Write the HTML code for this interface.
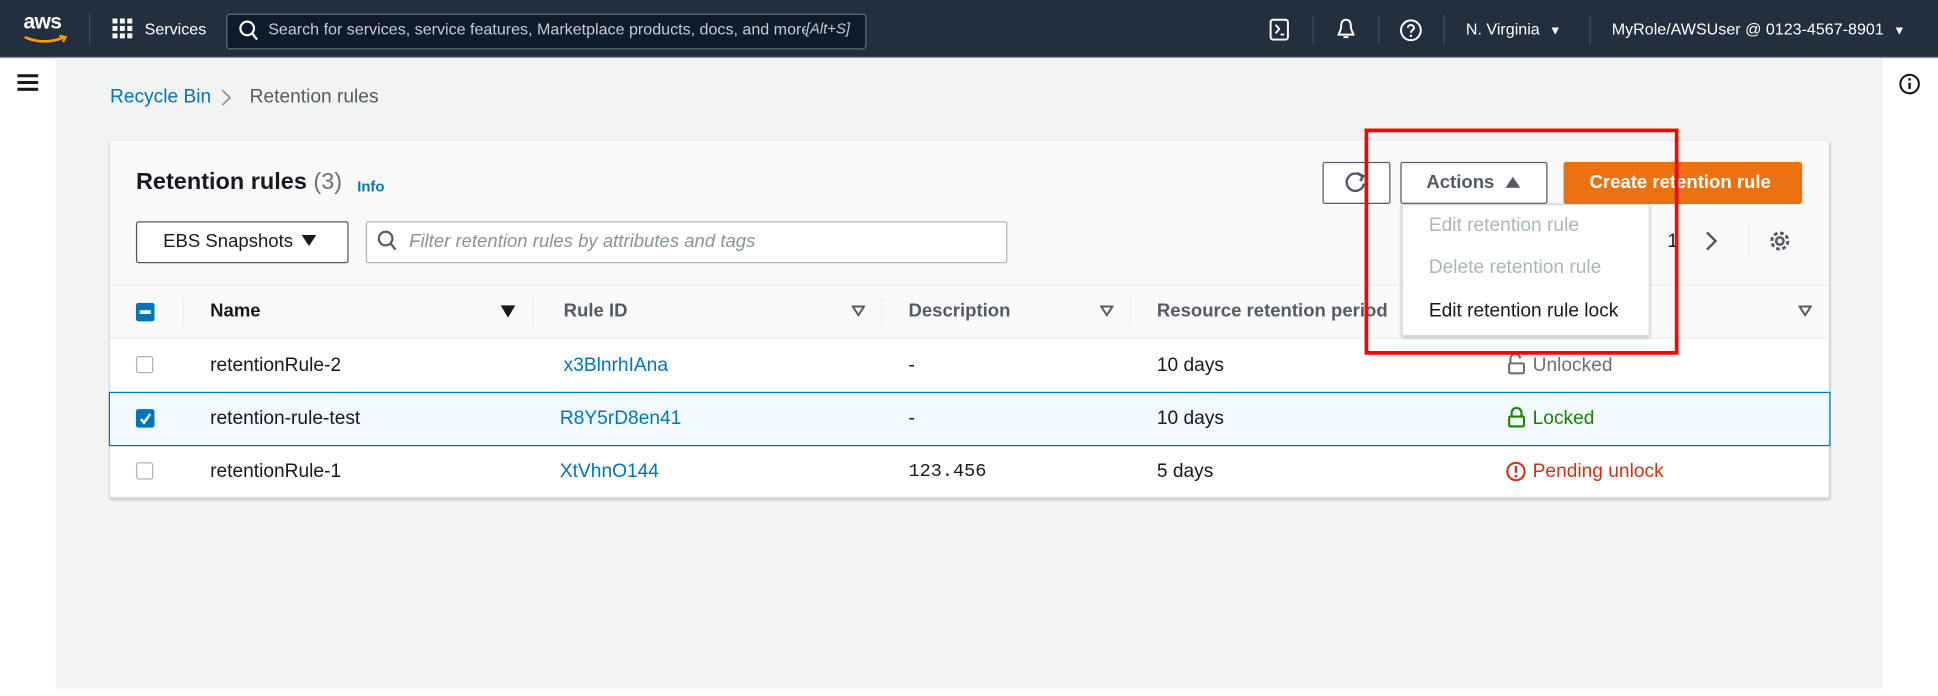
<!DOCTYPE html>
<html><head><meta charset="utf-8"><style>
html,body{margin:0;padding:0;width:1938px;height:696px;overflow:hidden;background:#fff}
#s{position:absolute;left:0;top:0;width:1568px;height:563px;transform:scale(1.236);transform-origin:0 0;font-family:"Liberation Sans",sans-serif;font-size:15.5px;color:#16191f}
.a{position:absolute}
.t{position:absolute;white-space:nowrap;line-height:1}
.top{left:0;top:0;width:1568px;height:46px;background:#232f3e;border-bottom:1px solid #8d99a8}
.w{color:#fff}
.sep{position:absolute;width:1px;background:#414d5c}
.btn{position:absolute;border:1px solid #545b64;border-radius:2px;background:#fff}
.cb{position:absolute;width:12px;height:12px;border:1.5px solid #aab7b8;border-radius:2px;background:#fff}
.hsep{position:absolute;top:241px;width:1px;height:22px;background:#eaeded}
.link{color:#0073bb}
.h{font-size:15px}
</style></head><body><div id="s">
<div class="a top"></div>
<div class="t w" style="left:19px;top:9px;font-size:17px;font-weight:bold;letter-spacing:-0.5px">aws</div>
<svg class="a" style="left:18px;top:27px" width="38" height="10"><path d="M2 3 Q18 10 34 3" stroke="#ff9900" stroke-width="2.2" fill="none"/><path d="M30 2 L35 3 L33 7" stroke="#ff9900" stroke-width="1.8" fill="none"/></svg>
<div class="sep" style="left:72px;top:10px;height:26px"></div>
<svg class="a" style="left:91px;top:15px" width="17" height="17" fill="#fff"><rect x="0" y="0" width="4" height="4"/><rect x="6" y="0" width="4" height="4"/><rect x="12" y="0" width="4" height="4"/><rect x="0" y="6" width="4" height="4"/><rect x="6" y="6" width="4" height="4"/><rect x="12" y="6" width="4" height="4"/><rect x="0" y="12" width="4" height="4"/><rect x="6" y="12" width="4" height="4"/><rect x="12" y="12" width="4" height="4"/></svg>
<div class="t w" style="left:117px;top:17px;font-size:13px">Services</div>
<div class="a" style="left:183px;top:11px;width:516px;height:27px;background:#0f1b2a;border:1px solid #5f6b7a;border-radius:3px"></div>
<svg class="a" style="left:193px;top:16px" width="16" height="17"><circle cx="7" cy="7" r="5.5" stroke="#fff" stroke-width="1.8" fill="none"/><path d="M11 11 L15 16" stroke="#fff" stroke-width="1.8"/></svg>
<div class="t" style="left:217px;top:17px;font-size:13px;color:#c6ccd4">Search for services, service features, Marketplace products, docs, and more</div>
<div class="t" style="left:652px;top:17px;font-size:12px;color:#c6ccd4;font-style:italic;background:#0f1b2a">[Alt+S]</div>
<svg class="a" style="left:1027px;top:15px" width="17" height="19"><rect x="1" y="1" width="14" height="16" rx="2" stroke="#fff" stroke-width="1.6" fill="none"/><path d="M5 5 L8 8.5 L5 12 M9 13 H12" stroke="#fff" stroke-width="1.5" fill="none"/></svg>
<div class="sep" style="left:1062px;top:12px;height:24px"></div>
<svg class="a" style="left:1080px;top:14px" width="18" height="20"><path d="M9 2 C5 2 5 6 5 9 L3 14 H15 L13 9 C13 6 13 2 9 2 Z M7 16 H11" stroke="#fff" stroke-width="1.6" fill="none"/></svg>
<div class="sep" style="left:1115px;top:12px;height:24px"></div>
<svg class="a" style="left:1132px;top:15px" width="19" height="19"><circle cx="9.5" cy="9.5" r="8" stroke="#fff" stroke-width="1.6" fill="none"/><path d="M7 7.5 C7 4.5 12 4.5 12 7.5 C12 9.5 9.5 9.5 9.5 11.5" stroke="#fff" stroke-width="1.6" fill="none"/><circle cx="9.5" cy="14" r="1" fill="#fff"/></svg>
<div class="sep" style="left:1168px;top:12px;height:24px"></div>
<div class="t w" style="left:1186px;top:17px;font-size:13px">N. Virginia <span style="font-size:10px;margin-left:4px">▼</span></div>
<div class="sep" style="left:1286px;top:12px;height:24px"></div>
<div class="t w" style="left:1304px;top:17px;font-size:13px">MyRole/AWSUser @ 0123-4567-8901 <span style="font-size:10px;margin-left:4px">▼</span></div>

<div class="a" style="left:45px;top:47px;width:1477px;height:510px;background:#f2f3f3"></div>
<div class="a" style="left:1522px;top:47px;width:1px;height:510px;background:#eaeded"></div>
<svg class="a" style="left:14px;top:60px" width="17" height="14" fill="#16191f"><rect x="0" y="0" width="17" height="2.5"/><rect x="0" y="5.5" width="17" height="2.5"/><rect x="0" y="11" width="17" height="2.5"/></svg>
<svg class="a" style="left:1536px;top:59px" width="18" height="18"><circle cx="9" cy="9" r="7.5" stroke="#16191f" stroke-width="1.7" fill="none"/><path d="M9 8 V13" stroke="#16191f" stroke-width="2"/><circle cx="9" cy="5.2" r="1.1" fill="#16191f"/></svg>

<div class="t link" style="left:89px;top:71px">Recycle Bin</div>
<svg class="a" style="left:178px;top:71px" width="10" height="16"><path d="M2 2 L8 8 L2 14" stroke="#879596" stroke-width="1.4" fill="none"/></svg>
<div class="t" style="left:202px;top:71px;color:#545b64">Retention rules</div>

<div class="a" style="left:89px;top:114px;width:1391px;height:289px;background:#fff;box-shadow:0 1px 2px rgba(0,28,36,.3),1px 1px 1px rgba(0,28,36,.1)"></div>
<div class="a" style="left:89px;top:114px;width:1391px;height:117px;background:#fafafa"></div>
<div class="a" style="left:89px;top:230px;width:1391px;height:43px;background:#fafafa;border-top:1px solid #eaeded"></div>
<div class="t" style="left:110px;top:138px;font-size:19px;font-weight:bold">Retention rules <span style="font-weight:normal;color:#687078">(3)</span></div>
<div class="t link" style="left:289px;top:145px;font-size:12px;font-weight:bold">Info</div>

<div class="btn" style="left:1070px;top:131px;width:53px;height:32px"></div>
<svg class="a" style="left:1087px;top:138px" width="20" height="20"><path d="M15 5 A7 7 0 1 0 16.5 10.5" stroke="#545b64" stroke-width="2" fill="none"/><path d="M11 2 L16 4.5 L13.5 8.5" stroke="#545b64" stroke-width="2" fill="none"/></svg>
<div class="btn" style="left:1133px;top:131px;width:117px;height:32px"></div>
<div class="t h" style="left:1154px;top:140px;font-weight:bold;color:#545b64">Actions</div>
<svg class="a" style="left:1218px;top:142px" width="12" height="10"><path d="M0 10 L6 1 L12 10Z" fill="#545b64"/></svg>
<div class="a" style="left:1265px;top:131px;width:193px;height:34px;background:#ec7211;border-radius:2px"></div>
<div class="t h" style="left:1286px;top:140px;font-weight:bold;color:#fff">Create retention rule</div>

<div class="btn" style="left:110px;top:179px;width:170px;height:32px"></div>
<div class="t h" style="left:132px;top:188px;color:#16191f">EBS Snapshots</div>
<svg class="a" style="left:244px;top:190px" width="12" height="10"><path d="M0 0 L12 0 L6 9Z" fill="#16191f"/></svg>
<div class="a" style="left:296px;top:179px;width:517px;height:32px;border:1px solid #aab7b8;border-radius:2px;background:#fff"></div>
<svg class="a" style="left:305px;top:186px" width="16" height="18"><circle cx="7" cy="7" r="5.5" stroke="#545b64" stroke-width="1.8" fill="none"/><path d="M11 11 L15 16" stroke="#545b64" stroke-width="1.8"/></svg>
<div class="t h" style="left:331px;top:188px;color:#879596;font-style:italic">Filter retention rules by attributes and tags</div>

<div class="t" style="left:1349px;top:188px;color:#16191f">1</div>
<svg class="a" style="left:1379px;top:186px" width="12" height="18"><path d="M2 2 L9 9 L2 16" stroke="#545b64" stroke-width="2" fill="none"/></svg>
<div class="a" style="left:1415px;top:180px;width:1px;height:30px;background:#eaeded"></div>
<svg class="a" style="left:1431px;top:186px" width="18" height="18"><circle cx="9" cy="9" r="3" stroke="#545b64" stroke-width="2" fill="none"/><circle cx="9" cy="9" r="6.5" stroke="#545b64" stroke-width="2.4" fill="none" stroke-dasharray="3 2.1"/></svg>

<div class="a" style="left:110px;top:245px;width:15px;height:15px;background:#0073bb;border-radius:2px"></div>
<div class="a" style="left:113px;top:251px;width:9px;height:2.5px;background:#fff"></div>
<div class="hsep" style="left:148px"></div>
<div class="t h" style="left:170px;top:244px;font-weight:bold">Name</div>
<svg class="a" style="left:405px;top:247px" width="12" height="10"><path d="M0 0 L12 0 L6 10Z" fill="#16191f"/></svg>
<div class="hsep" style="left:431px"></div>
<div class="t h" style="left:456px;top:244px;font-weight:bold;color:#545b64">Rule ID</div>
<svg class="a" style="left:689px;top:247px" width="11" height="9"><path d="M1 1 L10 1 L5.5 8Z" stroke="#545b64" stroke-width="1.6" fill="none"/></svg>
<div class="hsep" style="left:713px"></div>
<div class="t h" style="left:735px;top:244px;font-weight:bold;color:#545b64">Description</div>
<svg class="a" style="left:890px;top:247px" width="11" height="9"><path d="M1 1 L10 1 L5.5 8Z" stroke="#545b64" stroke-width="1.6" fill="none"/></svg>
<div class="hsep" style="left:914px"></div>
<div class="t h" style="left:936px;top:244px;font-weight:bold;color:#545b64">Resource retention period</div>
<svg class="a" style="left:1455px;top:247px" width="11" height="9"><path d="M1 1 L10 1 L5.5 8Z" stroke="#545b64" stroke-width="1.6" fill="none"/></svg>

<div class="a" style="left:89px;top:273px;width:1391px;height:1px;background:#eaeded"></div>
<div class="cb" style="left:110px;top:288px"></div>
<div class="t" style="left:170px;top:288px">retentionRule-2</div>
<div class="t link" style="left:456px;top:288px">x3BlnrhIAna</div>
<div class="t" style="left:735px;top:288px">-</div>
<div class="t" style="left:936px;top:288px">10 days</div>
<svg class="a" style="left:1219px;top:286px" width="16" height="17"><path d="M3 8 V5 A4 4 0 0 1 11 4" stroke="#687078" stroke-width="1.7" fill="none"/><rect x="2" y="8" width="12" height="8" rx="1" stroke="#687078" stroke-width="1.7" fill="none"/></svg>
<div class="t" style="left:1240px;top:288px;color:#687078">Unlocked</div>

<div class="a" style="left:88px;top:317px;width:1391px;height:42px;background:#f1faff;border:1px solid #0073bb"></div>
<div class="a" style="left:110px;top:331px;width:15px;height:15px;background:#0073bb;border-radius:2px"></div>
<svg class="a" style="left:111px;top:332px" width="13" height="13"><path d="M3 7 L5.5 10 L10.5 3" stroke="#fff" stroke-width="2" fill="none"/></svg>
<div class="t" style="left:170px;top:331px">retention-rule-test</div>
<div class="t link" style="left:453px;top:331px">R8Y5rD8en41</div>
<div class="t" style="left:735px;top:331px">-</div>
<div class="t" style="left:936px;top:331px">10 days</div>
<svg class="a" style="left:1219px;top:329px" width="16" height="17"><path d="M4 8 V5 A4 4 0 0 1 12 5 V8" stroke="#1d8102" stroke-width="1.7" fill="none"/><rect x="2" y="8" width="12" height="8" rx="1" stroke="#1d8102" stroke-width="1.7" fill="none"/></svg>
<div class="t" style="left:1240px;top:331px;color:#1d8102">Locked</div>

<div class="a" style="left:89px;top:402px;width:1391px;height:2px;background:#d5dbdb"></div>
<div class="cb" style="left:110px;top:374px"></div>
<div class="t" style="left:170px;top:374px">retentionRule-1</div>
<div class="t link" style="left:453px;top:374px">XtVhnO144</div>
<div class="t" style="left:735px;top:374px;font-family:'Liberation Mono',monospace;font-size:15px">123.456</div>
<div class="t" style="left:936px;top:374px">5 days</div>
<svg class="a" style="left:1218px;top:373px" width="17" height="17"><circle cx="8.5" cy="8.5" r="7" stroke="#d13212" stroke-width="1.7" fill="none"/><path d="M8.5 4 V9.5" stroke="#d13212" stroke-width="2"/><circle cx="8.5" cy="12.3" r="1.1" fill="#d13212"/></svg>
<div class="t" style="left:1240px;top:374px;color:#d13212">Pending unlock</div>

<div class="a" style="left:1134px;top:165px;width:199px;height:105px;background:#fff;border:1px solid #d5dbdb;box-shadow:0 1px 3px rgba(0,28,36,.3)"></div>
<div class="t" style="left:1156px;top:175px;color:#aab7b8">Edit retention rule</div>
<div class="t" style="left:1156px;top:209px;color:#aab7b8">Delete retention rule</div>
<div class="t" style="left:1156px;top:244px;color:#16191f">Edit retention rule lock</div>

<div class="a" style="left:1104px;top:104px;width:248px;height:177px;border:3px solid #ff0000"></div>
</div></body></html>
